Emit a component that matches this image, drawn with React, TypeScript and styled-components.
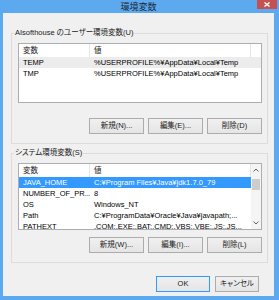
import styled, { createGlobalStyle } from 'styled-components';

const UI_FONT = `"Liberation Sans", "Noto Sans CJK JP", sans-serif`;

const GlobalStyle = createGlobalStyle`
  html, body {
    margin: 0;
    padding: 0;
  }
  body {
    width: 279px;
    height: 300px;
    overflow: hidden;
    background: #5ca9ef;
    font-family: ${UI_FONT};
    font-feature-settings: "palt";
  }
`;

const Window = styled.div`
  width: 279px;
  height: 300px;
  box-sizing: border-box;
  display: flex;
  flex-direction: column;
  padding: 0 5px 4px 3px;
  background: #5ca9ef;
`;

const TitleBar = styled.div`
  position: relative;
  height: 13px;
  display: flex;
  align-items: center;
  justify-content: center;
  font-size: 9px;
  color: #1e2a36;
`;

const CloseButton = styled.div`
  position: absolute;
  top: 0;
  right: -3px;
  width: 20px;
  height: 9px;
  background: #c75050;
  display: flex;
  align-items: center;
  justify-content: center;
`;

const Client = styled.div`
  flex: 1;
  background: #f0f0f0;
  padding: 15px 6px 0 8px;
  display: flex;
  flex-direction: column;
  gap: 4px;
`;

const Group = styled.fieldset`
  margin: 0;
  min-width: 0;
  border: 1px solid #dcdcdc;
  padding: 5px 5px 9px 6px;
`;

const Legend = styled.legend`
  margin-left: -4px;
  padding: 0 1px;
  font-size: 7.5px;
  line-height: 10px;
  color: #1a1a1a;
`;

const ListBox = styled.div<{ $height: number }>`
  height: ${(p) => p.$height}px;
  box-sizing: border-box;
  border: 1px solid #abadb3;
  background: #fff;
  display: flex;
  overflow: hidden;
`;

const ListBody = styled.div`
  flex: 1;
  overflow: hidden;
`;

const HeaderRow = styled.div`
  display: grid;
  grid-template-columns: 71px 161px;
  height: 13px;
`;

const HeaderCell = styled.div`
  padding-left: 4px;
  font-size: 7.5px;
  line-height: 13px;
  color: #222;
  border-right: 1px solid #e5e5e5;
`;

const Row = styled.div<{ $selected?: 'active' | 'inactive' }>`
  display: grid;
  grid-template-columns: 71px 161px;
  height: 11px;
  background: ${(p) =>
    p.$selected === 'active' ? '#3399ff' : p.$selected === 'inactive' ? '#ececec' : 'transparent'};
  color: ${(p) => (p.$selected === 'active' ? '#fff' : '#000')};
`;

const Cell = styled.div`
  padding-left: 4px;
  font-size: 7.5px;
  line-height: 11px;
  white-space: nowrap;
  overflow: hidden;
`;

const ScrollBar = styled.div`
  width: 10px;
  display: flex;
  flex-direction: column;
  background: #f4f4f4;
`;

const ScrollArrow = styled.div`
  height: 12px;
  display: flex;
  align-items: center;
  justify-content: center;
`;

const ScrollTrack = styled.div`
  flex: 1;
  padding: 3px 1px 0;
`;

const ScrollThumb = styled.div`
  height: 11px;
  background: #cdcdcd;
`;

const ButtonRow = styled.div<{ $gapTop: number }>`
  display: flex;
  justify-content: flex-end;
  gap: 4px;
  margin-top: ${(p) => p.$gapTop}px;
`;

const Footer = styled.div`
  display: flex;
  justify-content: flex-end;
  gap: 5px;
  margin-top: 9px;
  padding-right: 9px;
`;

const Button = styled.button<{ $width: number; $primary?: boolean }>`
  width: ${(p) => p.$width}px;
  height: 16px;
  padding: 0;
  box-sizing: border-box;
  border: 1px solid ${(p) => (p.$primary ? '#3399ff' : '#acacac')};
  background: linear-gradient(#f0f0f0, #e5e5e5);
  font-family: ${UI_FONT};
  font-feature-settings: "palt";
  font-size: 7.5px;
  line-height: 14px;
  color: #1a1a1a;
`;

type EnvVar = { name: string; value: string; selected?: 'active' | 'inactive' };

const userVars: EnvVar[] = [
  { name: 'TEMP', value: '%USERPROFILE%¥AppData¥Local¥Temp', selected: 'inactive' },
  { name: 'TMP', value: '%USERPROFILE%¥AppData¥Local¥Temp' },
];

const systemVars: EnvVar[] = [
  { name: 'JAVA_HOME', value: 'C:¥Program Files¥Java¥jdk1.7.0_79', selected: 'active' },
  { name: 'NUMBER_OF_PR...', value: '8' },
  { name: 'OS', value: 'Windows_NT' },
  { name: 'Path', value: 'C:¥ProgramData¥Oracle¥Java¥javapath;...' },
  { name: 'PATHEXT', value: '.COM;.EXE;.BAT;.CMD;.VBS;.VBE;.JS;.JS...' },
];

function Chevron({ up }: { up?: boolean }) {
  return (
    <svg width="6" height="4" viewBox="0 0 6 4">
      <path
        d={up ? 'M0.5 3.5 L3 1 L5.5 3.5' : 'M0.5 0.5 L3 3 L5.5 0.5'}
        fill="none"
        stroke="#606060"
        strokeWidth="1"
      />
    </svg>
  );
}

function VarList({ vars, height, scroll }: { vars: EnvVar[]; height: number; scroll?: boolean }) {
  return (
    <ListBox $height={height}>
      <ListBody>
        <HeaderRow>
          <HeaderCell>変数</HeaderCell>
          <HeaderCell>値</HeaderCell>
        </HeaderRow>
        {vars.map((v) => (
          <Row key={v.name} $selected={v.selected}>
            <Cell>{v.name}</Cell>
            <Cell>{v.value}</Cell>
          </Row>
        ))}
      </ListBody>
      {scroll && (
        <ScrollBar>
          <ScrollArrow>
            <Chevron up />
          </ScrollArrow>
          <ScrollTrack>
            <ScrollThumb />
          </ScrollTrack>
          <ScrollArrow>
            <Chevron />
          </ScrollArrow>
        </ScrollBar>
      )}
    </ListBox>
  );
}

export default function App() {
  return (
    <>
      <GlobalStyle />
      <Window>
        <TitleBar>
          環境変数
          <CloseButton>
            <svg width="6" height="5" viewBox="0 0 6 5">
              <path d="M0.5 0.5 L5.5 4.5 M5.5 0.5 L0.5 4.5" stroke="#fff" strokeWidth="1.4" />
            </svg>
          </CloseButton>
        </TitleBar>
        <Client>
          <Group>
            <Legend>AIsofthouse のユーザー環境変数(U)</Legend>
            <VarList vars={userVars} height={60} />
            <ButtonRow $gapTop={15}>
              <Button $width={55}>新規(N)...</Button>
              <Button $width={55}>編集(E)...</Button>
              <Button $width={55}>削除(D)</Button>
            </ButtonRow>
          </Group>
          <Group>
            <Legend>システム環境変数(S)</Legend>
            <VarList vars={systemVars} height={67} scroll />
            <ButtonRow $gapTop={7}>
              <Button $width={55}>新規(W)...</Button>
              <Button $width={55}>編集(I)...</Button>
              <Button $width={55}>削除(L)</Button>
            </ButtonRow>
          </Group>
          <Footer>
            <Button $width={54} $primary>
              OK
            </Button>
            <Button $width={44}>キャンセル</Button>
          </Footer>
        </Client>
      </Window>
    </>
  );
}
